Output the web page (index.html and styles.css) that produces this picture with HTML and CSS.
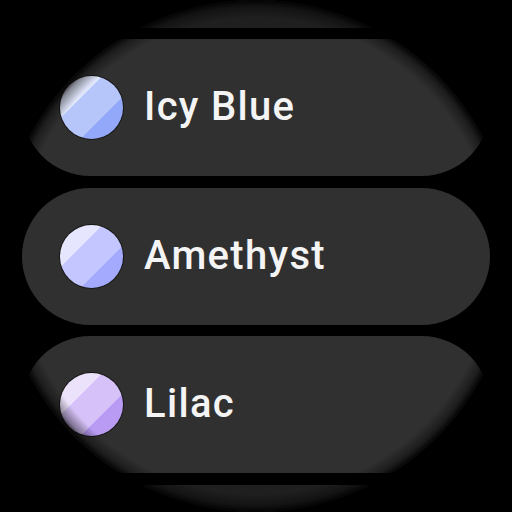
FILE: index.html
```html
<!DOCTYPE html>
<html lang="en">
<head>
  <meta charset="UTF-8">
  <title>Colour style</title>
  <meta name="viewport" content="width=device-width, initial-scale=1.0">
  <link rel="stylesheet" href="styles.css">
</head>
<body>

  <div class="watch">
    <ul class="chip-list">
      <li class="chip chip-ghost"></li>
      <li class="chip">
        <span class="swatch icy-blue"></span>
        <span class="chip-label">Icy Blue</span>
      </li>
      <li class="chip">
        <span class="swatch amethyst"></span>
        <span class="chip-label">Amethyst</span>
      </li>
      <li class="chip">
        <span class="swatch lilac"></span>
        <span class="chip-label">Lilac</span>
      </li>
      <li class="chip chip-ghost"></li>
    </ul>
    <div class="edge-fade"></div>
  </div>

</body>
</html>
```

FILE: styles.css
```css
body {
  margin: 0;
  padding: 0;
  background: #000;
  font-family: Roboto, "Noto Sans", sans-serif;
}

.watch {
  position: relative;
  width: 512px;
  height: 512px;
  border-radius: 50%;
  overflow: hidden;
  background: #000;
}

.chip-list {
  list-style: none;
  margin: 0;
  padding: 0;
  height: 100%;
  display: flex;
  flex-direction: column;
  justify-content: center;
  gap: 11.5px;
}

.chip {
  flex-shrink: 0;
  height: 137px;
  margin: 0 22px;
  border-radius: 69px;
  background: #303030;
  display: flex;
  align-items: center;
  gap: 21px;
  padding-left: 38px;
}

.chip-ghost {
  background: #1f1f1f;
}

.chip-label {
  color: #f4f4f4;
  font-size: 40px;
  font-weight: 500;
  letter-spacing: 1.3px;
  margin-top: -2px;
}

/* three diagonal bands, lightest at top left */
.swatch {
  width: 63px;
  height: 63px;
  border-radius: 50%;
  box-shadow: 0 0 0 1px rgba(0, 0, 0, 0.5);
}

.icy-blue {
  background: linear-gradient(135deg, #dfe5fa 0 34%, #b6c6fb 34% 66%, #93a8f8 66%);
}

.amethyst {
  background: linear-gradient(135deg, #e6e6ff 0 34%, #c3c6ff 34% 66%, #a4aafd 66%);
}

.lilac {
  background: linear-gradient(135deg, #ede2fb 0 34%, #d6c2f8 34% 66%, #b99bf3 66%);
}

/* soft shade along the round edge of the screen */
.edge-fade {
  position: absolute;
  inset: 0;
  pointer-events: none;
  background: radial-gradient(circle closest-side, rgba(0, 0, 0, 0) 93%, rgba(0, 0, 0, 0.4) 97.5%, rgba(0, 0, 0, 0.9) 100%);
}
```
